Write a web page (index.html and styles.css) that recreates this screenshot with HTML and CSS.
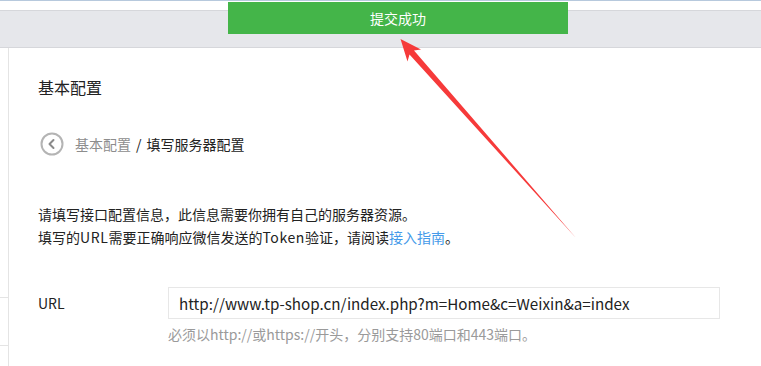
FILE: index.html
```html
<!DOCTYPE html>
<html lang="zh-CN">
<head>
    <meta charset="UTF-8">
    <title>基本配置</title>
    <link rel="stylesheet" href="styles.css">
</head>
<body>
    <div class="top-strip"></div>
    <div class="top-bar"></div>

    <div class="toast">提交成功</div>

    <div class="main">
        <div class="sidebar">
            <div class="menu-item"></div>
        </div>

        <div class="content">
            <h2 class="page-title">基本配置</h2>

            <div class="breadcrumb">
                <span class="back-btn">
                    <svg width="24" height="24" viewBox="0 0 24 24">
                        <circle cx="12" cy="12" r="10.5" fill="none" stroke="#b4b4b4" stroke-width="2"/>
                        <path d="M13.5 8 L9.5 12 L13.5 16" fill="none" stroke="#8a8a8a" stroke-width="2" stroke-linecap="round" stroke-linejoin="round"/>
                    </svg>
                </span>
                <span class="crumb-parent">基本配置</span>
                <span class="crumb-sep">/</span>
                <span class="crumb-current">填写服务器配置</span>
            </div>

            <div class="intro">
                <p>请填写接口配置信息，此信息需要你拥有自己的服务器资源。</p>
                <p>填写的<span class="latin">URL</span>需要正确响应微信发送的<span class="latin">Token</span>验证，请阅读<a href="#">接入指南</a>。</p>
            </div>

            <div class="form-row">
                <label class="form-label">URL</label>
                <div class="form-field">
                    <input type="text" class="form-input" value="http://www.tp-shop.cn/index.php?m=Home&amp;c=Weixin&amp;a=index">
                    <p class="form-tip">必须以http://或https://开头，分别支持80端口和443端口。</p>
                </div>
            </div>
        </div>
    </div>

    <!-- 标注箭头 -->
    <svg class="arrow" width="761" height="366" viewBox="0 0 761 366">
        <polygon points="400.5,39 421,49.5 414,50.5 576,238 409.5,54.5 407.5,61.5" fill="#f63a3a"/>
    </svg>
</body>
</html>
```

FILE: styles.css
```css
html,
body {
    overflow: hidden;
}

body {
    margin: 0;
    font-family: "Noto Sans CJK SC", sans-serif;
    font-size: 14px;
    color: #222;
    background: #fff;
    position: relative;
}

.top-strip {
    height: 9px;
    border-top: 1px solid #b7c9dd;
    background: #fff;
}

.top-bar {
    height: 36px;
    background: #e6e7eb;
    border-top: 1px solid #d6d7db;
    border-bottom: 1px solid #d6d7db;
}

.toast {
    position: absolute;
    top: 2px;
    left: 228px;
    width: 340px;
    height: 32px;
    line-height: 32px;
    background: #44b549;
    color: #fff;
    text-align: center;
    font-size: 14px;
}

.main {
    display: flex;
    height: calc(100vh - 48px);
}

.sidebar {
    width: 8px;
    border-right: 1px solid #e4e4e4;
    padding-top: 249px;
}

.menu-item {
    height: 47px;
    border-top: 1px solid #e4e4e4;
    border-bottom: 1px solid #e4e4e4;
}

.content {
    flex: 1;
    padding: 27px 41px 0 29px;
}

.page-title {
    margin: 0;
    font-size: 16px;
    font-weight: normal;
    line-height: 24px;
    color: #222;
}

.breadcrumb {
    display: flex;
    align-items: center;
    margin-top: 33px;
    height: 24px;
}

.back-btn {
    display: flex;
    margin: 0 11px 0 2px;
}

.crumb-parent {
    color: #8d8d8d;
}

.crumb-sep {
    margin: 0 5px;
}

.intro {
    margin-top: 47px;
}

.intro p {
    margin: 0;
    line-height: 23px;
}

.intro .latin {
    letter-spacing: 0.6px;
}

.intro a {
    color: #459ae9;
    text-decoration: none;
}

.form-row {
    display: flex;
    margin-top: 38px;
}

.form-label {
    width: 130px;
    line-height: 32px;
}

.form-field {
    flex: 1;
}

.form-input {
    display: block;
    box-sizing: border-box;
    width: 100%;
    height: 32px;
    margin: 0;
    padding: 0 10px;
    border: 1px solid #e7e7e7;
    font-family: inherit;
    font-size: 15.2px;
    color: #222;
    outline: none;
}

.form-tip {
    margin: 5px 0 0;
    line-height: 20px;
    color: #9a9a9a;
}

.arrow {
    position: absolute;
    top: 0;
    left: 0;
    pointer-events: none;
}
```
